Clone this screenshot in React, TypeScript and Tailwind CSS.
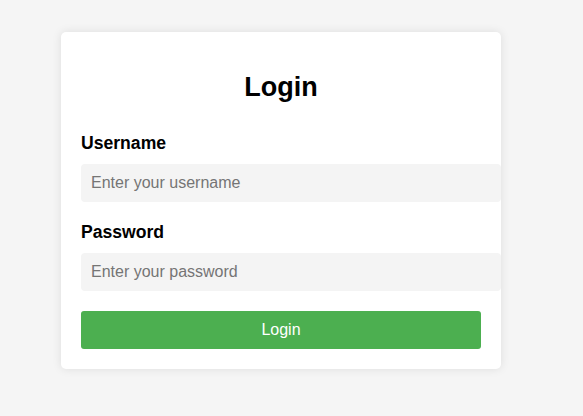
import { useState } from 'react'

export default function App() {
  const [username, setUsername] = useState('')
  const [password, setPassword] = useState('')

  return (
    <div className="min-h-screen bg-[#f5f5f5] pt-[32px] pl-[61px] font-['Liberation_Sans',Arial,sans-serif]">
      <form
        className="w-[440px] rounded-[5px] bg-white p-5 shadow-[0_0_10px_rgba(0,0,0,0.1)]"
        onSubmit={(e) => e.preventDefault()}
      >
        <h2 className="mt-[20px] mb-[30px] text-center text-[27px] leading-[31px] font-bold text-black">Login</h2>

        {/* username */}
        <label htmlFor="username" className="block text-[17.6px] leading-[20px] font-bold text-black">
          Username
        </label>
        <input
          id="username"
          type="text"
          value={username}
          onChange={(e) => setUsername(e.target.value)}
          placeholder="Enter your username"
          className="mt-[11px] block w-[420px] rounded-[4px] bg-[#f4f4f4] px-[10px] py-[10px] text-[16px] leading-[18px] text-black placeholder:text-[#757575] outline-none"
        />

        {/* password */}
        <label htmlFor="password" className="mt-[20px] block text-[17.6px] leading-[20px] font-bold text-black">
          Password
        </label>
        <input
          id="password"
          type="password"
          value={password}
          onChange={(e) => setPassword(e.target.value)}
          placeholder="Enter your password"
          className="mt-[11px] block w-[420px] rounded-[4px] bg-[#f4f4f4] px-[10px] py-[10px] text-[16px] leading-[18px] text-black placeholder:text-[#757575] outline-none"
        />

        <button
          type="submit"
          className="mt-[20px] block h-[38px] w-full rounded-[3px] bg-[#4caf50] text-[16px] text-white"
        >
          Login
        </button>
      </form>
    </div>
  )
}
